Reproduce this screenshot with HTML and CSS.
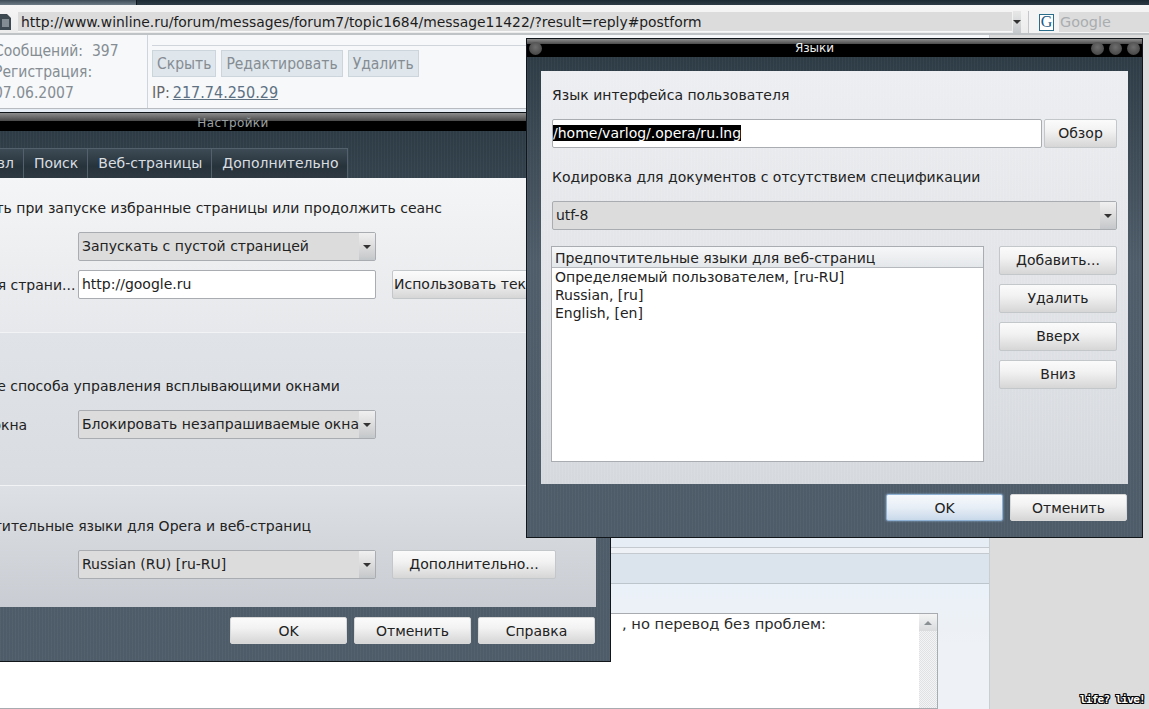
FILE: index.html
```html
<!DOCTYPE html>
<html lang="ru">
<head>
  <meta charset="UTF-8">
  <title>Языки</title>
  <link rel="stylesheet" href="styles.css">
</head>
<body>
<div class="screen">

  <!-- browser chrome -->
  <div class="top-strip">
    <div class="top-strip-left"></div>
    <div class="top-strip-right"></div>
  </div>
  <div class="toolbar">
    <svg class="favicon" width="11" height="16" viewBox="0 0 11 16">
      <path d="M0 0h7l4 4v12H0z" fill="#3d4a52"/>
      <path d="M2 6h7M2 8h7M2 10h7M2 12h7" stroke="#c9d0d4" stroke-width="1"/>
    </svg>
    <div class="address">http://www.winline.ru/forum/messages/forum7/topic1684/message11422/?result=reply#postform</div>
    <div class="address-drop"><span class="arrow"></span></div>
    <div class="search">
      <span class="search-icon">G</span>
      <span class="search-text">Google</span>
    </div>
  </div>

  <!-- forum page behind the dialogs -->
  <div class="page">
    <div class="post-row">
      <div class="post-info">
        <div>Сообщений:&nbsp; 397</div>
        <div>Регистрация:</div>
        <div>07.06.2007</div>
      </div>
      <div class="post-actions">
        <div class="post-buttons">
          <span class="post-btn">Скрыть</span>
          <span class="post-btn">Редактировать</span>
          <span class="post-btn">Удалить</span>
        </div>
        <div class="post-ip">IP:<a class="post-link">217.74.250.29</a></div>
      </div>
    </div>
    <div class="post-gap"></div>
    <div class="reply-head"></div>
    <div class="reply-body">
      <div class="reply-box">
        <div class="reply-text">, но перевод без проблем:</div>
        <div class="reply-scroll"><div class="scroll-up"><span class="arrow arrow-up"></span></div></div>
      </div>
    </div>
  </div>

  <!-- settings window -->
  <div class="window window-settings">
    <div class="titlebar titlebar-dim">Настройки</div>
    <div class="tabs">
      <span class="tab">Общие</span>
      <span class="tab">Управл</span>
      <span class="tab">Поиск</span>
      <span class="tab">Веб-страницы</span>
      <span class="tab">Дополнительно</span>
    </div>
    <div class="settings-panel">
      <section class="group group-first">
        <h3 class="group-title">Показывать при запуске избранные страницы или продолжить сеанс</h3>
        <div class="field">
          <label class="field-label">Запуск</label>
          <div class="select"><span class="select-text">Запускать с пустой страницей</span><span class="select-btn"><span class="arrow"></span></span></div>
        </div>
        <div class="field">
          <label class="field-label">Выбранная страни...</label>
          <div class="input">http://google.ru</div>
          <span class="btn btn-wide">Использовать текущую</span>
        </div>
      </section>
      <section class="group group-second">
        <h3 class="group-title">Выявление способа управления всплывающими окнами</h3>
        <div class="field">
          <label class="field-label">Открыть окна</label>
          <div class="select"><span class="select-text">Блокировать незапрашиваемые окна</span><span class="select-btn"><span class="arrow"></span></span></div>
        </div>
      </section>
      <section class="group group-third">
        <h3 class="group-title">Предпочтительные языки для Opera и веб-страниц</h3>
        <div class="field">
          <label class="field-label">Язык</label>
          <div class="select"><span class="select-text">Russian (RU) [ru-RU]</span><span class="select-btn"><span class="arrow"></span></span></div>
          <span class="btn btn-more">Дополнительно...</span>
        </div>
      </section>
    </div>
    <div class="window-actions">
      <span class="btn btn-action">OK</span>
      <span class="btn btn-action">Отменить</span>
      <span class="btn btn-action">Справка</span>
    </div>
  </div>

  <!-- languages window -->
  <div class="window window-lang">
    <div class="titlebar">
      <span class="dot"></span>
      <span class="titlebar-name">Языки</span>
      <span class="dot"></span><span class="dot"></span><span class="dot"></span>
    </div>
    <div class="lang-panel">
      <div class="lang-label">Язык интерфейса пользователя</div>
      <div class="lang-file">
        <div class="input input-lang"><span class="selected">/home/varlog/.opera/ru.lng</span></div>
        <span class="btn btn-browse">Обзор</span>
      </div>
      <div class="lang-label">Кодировка для документов с отсутствием спецификации</div>
      <div class="select select-lang"><span class="select-text">utf-8</span><span class="select-btn"><span class="arrow"></span></span></div>
      <div class="lang-lists">
        <div class="listbox">
          <div class="listbox-head">Предпочтительные языки для веб-страниц</div>
          <div class="listbox-row">Определяемый пользователем, [ru-RU]</div>
          <div class="listbox-row">Russian, [ru]</div>
          <div class="listbox-row">English, [en]</div>
        </div>
        <div class="lang-buttons">
          <span class="btn">Добавить...</span>
          <span class="btn">Удалить</span>
          <span class="btn">Вверх</span>
          <span class="btn">Вниз</span>
        </div>
      </div>
    </div>
    <div class="window-actions">
      <span class="btn btn-action btn-default">OK</span>
      <span class="btn btn-action">Отменить</span>
    </div>
  </div>

  <div class="watermark">life? live!</div>
</div>
</body>
</html>
```

FILE: styles.css
```css
body {
  margin: 0;
  font-family: "DejaVu Sans", sans-serif;
  font-size: 14px;
  color: #222;
}

.screen {
  width: 1149px;
  height: 709px;
  position: relative;
  overflow: hidden;
  background-color: #dcdcdc;
}

/* browser chrome */
.top-strip {
  height: 5px;
  display: flex;
  background-color: #1f2d36;
}

.top-strip-left {
  width: 136px;
  background: linear-gradient(#3c4b55, #6d7c86);
  border-right: 1px solid #10181d;
}

.top-strip-right {
  flex: 1;
  background: linear-gradient(#1c2a33, #2c3b45);
}

.toolbar {
  height: 30px;
  box-sizing: border-box;
  display: flex;
  align-items: center;
  padding-top: 6px;
  background: linear-gradient(#f6f6f6, #ececec);
  border-bottom: 2px solid #bfc3c6;
}

.favicon {
  flex: none;
  margin-right: 7px;
}

.address {
  width: 994px;
  height: 20px;
  line-height: 20px;
  flex: none;
  padding-left: 3px;
  box-sizing: border-box;
  background-color: #dcdcdc;
  border-bottom: 1px solid #f8f8f8;
  font-size: 13.9px;
  white-space: nowrap;
  color: #1c1c1c;
}

.address-drop {
  width: 16px;
  height: 22px;
  margin-left: 1px;
  display: flex;
  align-items: center;
  justify-content: center;
  background: linear-gradient(#e8e8e8, #c6c9cc);
}

.search {
  margin-left: 7px;
  flex: 1;
  height: 22px;
  display: flex;
  align-items: center;
  padding-left: 10px;
  background-color: #f4f4f4;
  border-left: 1px solid #c4c8cb;
}

.search-icon {
  width: 13px;
  height: 15px;
  line-height: 14px;
  text-align: center;
  font-family: "Liberation Serif", serif;
  font-size: 16px;
  color: #1d5a86;
  border: 1px solid #2a6d8a;
  background-color: #fff;
}

.search-text {
  margin-left: 5px;
  padding: 0 60px 0 1px;
  font-size: 14.4px;
  line-height: 20px;
  color: #a9adb0;
  background-color: #dcdcdc;
}

.arrow {
  width: 0;
  height: 0;
  display: block;
  border-left: 4px solid transparent;
  border-right: 4px solid transparent;
  border-top: 4px solid #333;
}

.arrow-up {
  border-top: 0;
  border-bottom: 4px solid #8a8f93;
}

/* forum page */
.page {
  width: 996px;
  height: 674px;
  margin-left: -6px;
  display: flex;
  flex-direction: column;
  background-color: #eef2f7;
  border-right: 1px solid #c9ced3;
  box-sizing: border-box;
}

.post-row {
  height: 74px;
  flex: none;
  display: flex;
  background-color: #f6f8fa;
  border-bottom: 1px solid #b8bcc0;
  box-sizing: border-box;
  font-size: 15.5px;
  font-stretch: condensed;
  color: #858d93;
}

.post-info {
  width: 154px;
  box-sizing: border-box;
  padding: 6px 0 0 0;
  line-height: 21px;
  border-right: 1px solid #cfd5da;
  white-space: nowrap;
}

.post-actions {
  flex: 1;
  padding: 10px 4px 0 4px;
}

.post-buttons {
  display: flex;
  gap: 5px;
  padding-top: 4px;
  border-top: 1px solid #cfd5da;
}

.post-btn {
  height: 27px;
  line-height: 27px;
  padding: 0 4px;
  background-color: #dfe6ec;
  border: 1px solid #ccd5dc;
  box-sizing: border-box;
}

.post-ip {
  line-height: 32px;
  font-size: 16px;
  color: #666;
}

.post-link {
  margin-left: 3px;
  color: #5d7183;
  text-decoration: underline;
}

.post-gap {
  height: 438px;
  flex: none;
  background-color: #e6edf4;
  border-bottom: 1px solid #c3c9ce;
  margin-bottom: 5px;
}

.reply-head {
  height: 31px;
  flex: none;
  box-sizing: border-box;
  background-color: #dbe3ec;
  border-top: 1px solid #c3c9ce;
  border-bottom: 1px solid #bcc4cc;
}

.reply-body {
  flex: 1;
  padding: 29px 51px 0 0;
  background: linear-gradient(#eaf1f8, #eef1f5 60px);
}

.reply-box {
  height: 100%;
  display: flex;
  background-color: #fff;
  border: 1px solid #a8acb0;
  border-left: 0;
  box-sizing: border-box;
}

.reply-text {
  flex: 1;
  padding-left: 628px;
  line-height: 20px;
  font-size: 14.7px;
  white-space: nowrap;
  color: #2a2a2a;
}

.reply-scroll {
  width: 18px;
  flex: none;
  background: repeating-conic-gradient(#dfe1e3 0 25%, #f3f4f5 0 50%) 0 0 / 2px 2px;
}

.scroll-up {
  height: 17px;
  display: flex;
  align-items: center;
  justify-content: center;
  background: linear-gradient(#f4f4f4, #d9dbdd);
}

/* windows */
.window {
  position: absolute;
  box-sizing: border-box;
  display: flex;
  flex-direction: column;
  border: 1px solid #10161a;
  background:
    repeating-linear-gradient(90deg, rgba(255, 255, 255, 0.03) 0 1px, transparent 1px 3px),
    linear-gradient(#2b3943, #4f5d6a 45%, #4e5c69);
}

.window-settings {
  left: -145px;
  top: 112px;
  width: 756px;
  height: 550px;
}

.window-lang {
  left: 526px;
  top: 38px;
  width: 617px;
  height: 500px;
}

.titlebar {
  height: 18px;
  flex: none;
  box-sizing: border-box;
  display: flex;
  align-items: center;
  padding: 0 2px;
  gap: 5px;
  background: linear-gradient(#8d8d8d, #4c4c4c 28%, #000 30%, #000);
  color: #eee;
  font-size: 12px;
}

.titlebar-dim {
  justify-content: center;
  padding-top: 2px;
  letter-spacing: 0.4px;
  background: linear-gradient(#8d8d8d, #4c4c4c 42%, #000 44%, #000);
  color: #9aa0a4;
}

.titlebar-name {
  flex: 1;
  text-align: center;
  padding-right: 4px;
}

.dot {
  width: 13px;
  height: 13px;
  border-radius: 50%;
  background: radial-gradient(circle at 50% 40%, #6e6e6e, #3c3c3c);
  flex: none;
}

.tabs {
  display: flex;
  flex: none;
  height: 47px;
  align-items: flex-end;
  padding-left: 25px;
}

.tab {
  height: 30px;
  line-height: 28px;
  padding: 0 9px 0 10px;
  box-sizing: border-box;
  color: #d9dee1;
  background: linear-gradient(#3d4b56, #27333b 60%, #2d3841);
  border: 1px solid #53616c;
  border-bottom: 0;
  border-left: 0;
  white-space: nowrap;
}

/* settings panel */
.settings-panel {
  margin: 0 14px;
  height: 429px;
  flex: none;
}

.group {
  box-sizing: border-box;
  padding: 21px 0 0 54px;
  border-bottom: 1px solid #f2f3f4;
}

.group-first {
  height: 155px;
  background: linear-gradient(#f4f5f6, #e6e8eb);
}

.group-second {
  height: 153px;
  padding-top: 44px;
  background: linear-gradient(#e0e3e7, #d9dce1);
}

.group-third {
  height: 121px;
  padding-top: 31px;
  border-bottom: 0;
  background: linear-gradient(#dde0e4, #c9cdd3);
}

.group-third .group-title {
  margin-left: 6px;
}

.group-title {
  margin: 0 0 15px 0;
  font-weight: normal;
  font-size: 14px;
  line-height: 18px;
  white-space: nowrap;
}

.field {
  display: flex;
  align-items: center;
  height: 29px;
  margin-bottom: 9px;
}

.field-label {
  width: 154px;
  flex: none;
  white-space: nowrap;
}

.select {
  width: 298px;
  height: 29px;
  flex: none;
  box-sizing: border-box;
  display: flex;
  align-items: center;
  padding-left: 3px;
  background-color: #dcdcdc;
  border: 1px solid #a9adb1;
  border-radius: 2px;
}

.select-text {
  flex: 1;
  padding-bottom: 2px;
  white-space: nowrap;
  overflow: hidden;
}

.select-btn {
  width: 16px;
  height: 27px;
  flex: none;
  display: flex;
  align-items: center;
  justify-content: center;
  background: linear-gradient(#f0f0f0, #dcdcdc 50%, #c4c7ca);
}

.input {
  width: 298px;
  height: 29px;
  flex: none;
  box-sizing: border-box;
  line-height: 27px;
  padding-left: 3px;
  background-color: #fff;
  border: 1px solid #a9adb1;
  border-radius: 2px;
}

.btn {
  height: 29px;
  line-height: 27px;
  box-sizing: border-box;
  display: block;
  text-align: center;
  white-space: nowrap;
  overflow: hidden;
  background: linear-gradient(#fbfbfb, #f2f2f2 40%, #d6d6d6);
  border: 1px solid #c4c7ca;
  border-radius: 2px;
}

.btn-wide {
  width: 170px;
  margin-left: 16px;
  flex: none;
  text-align: left;
  padding-left: 1px;
}

.btn-more {
  width: 164px;
  margin-left: 16px;
  flex: none;
}

.window-actions {
  display: flex;
  justify-content: flex-end;
  gap: 7px;
  margin-top: 10px;
  padding-right: 15px;
}

.btn-action {
  width: 117px;
  height: 27px;
  line-height: 26px;
  border-color: #d8d8d8;
}

/* languages panel */
.lang-panel {
  margin: 14px 14px 0 14px;
  height: 413px;
  flex: none;
  box-sizing: border-box;
  padding: 15px 11px 0 11px;
  background:
    repeating-linear-gradient(90deg, rgba(255, 255, 255, 0.08) 0 1px, transparent 1px 3px),
    linear-gradient(#eceef1, #e2e4e8 50%, #d5d9de);
}

.lang-label {
  line-height: 18px;
  margin-bottom: 15px;
}

.lang-file {
  display: flex;
  gap: 2px;
  height: 29px;
  margin-bottom: 20px;
}

.input-lang {
  flex: 1;
  padding-left: 0;
  line-height: 26px;
}

.selected {
  color: #fff;
  background-color: #000;
}

.btn-browse {
  width: 73px;
  flex: none;
}

.select-lang {
  width: 100%;
}

.lang-lists {
  display: flex;
  margin-top: 16px;
  gap: 15px;
}

.listbox {
  width: 433px;
  height: 216px;
  flex: none;
  box-sizing: border-box;
  margin-left: -1px;
  background-color: #fff;
  border: 1px solid #a9adb1;
}

.listbox-head {
  height: 21px;
  line-height: 22px;
  padding-left: 3px;
  background: linear-gradient(#f6f7f8, #e4e7ea);
  border-bottom: 1px solid #b5b9bd;
  box-sizing: border-box;
}

.listbox-row {
  height: 18px;
  line-height: 18px;
  padding-left: 3px;
}

.lang-buttons {
  flex: 1;
  display: flex;
  flex-direction: column;
  gap: 9px;
}

.btn-default {
  background: linear-gradient(#f6f9fc, #e7eef6 50%, #c9d9ea);
  border: 1px solid #8fb1d3;
  box-shadow: 0 0 2px #9ec3e8;
}

.watermark {
  position: absolute;
  right: 4px;
  bottom: 3px;
  font-family: "DejaVu Sans Mono", monospace;
  font-size: 11px;
  font-weight: bold;
  line-height: 13px;
  letter-spacing: -0.7px;
  color: #fff;
  text-shadow: 1px 0 #000, -1px 0 #000, 0 1px #000, 0 -1px #000, 1px 1px #000, -1px -1px #000, 1px -1px #000, -1px 1px #000;
}
```
